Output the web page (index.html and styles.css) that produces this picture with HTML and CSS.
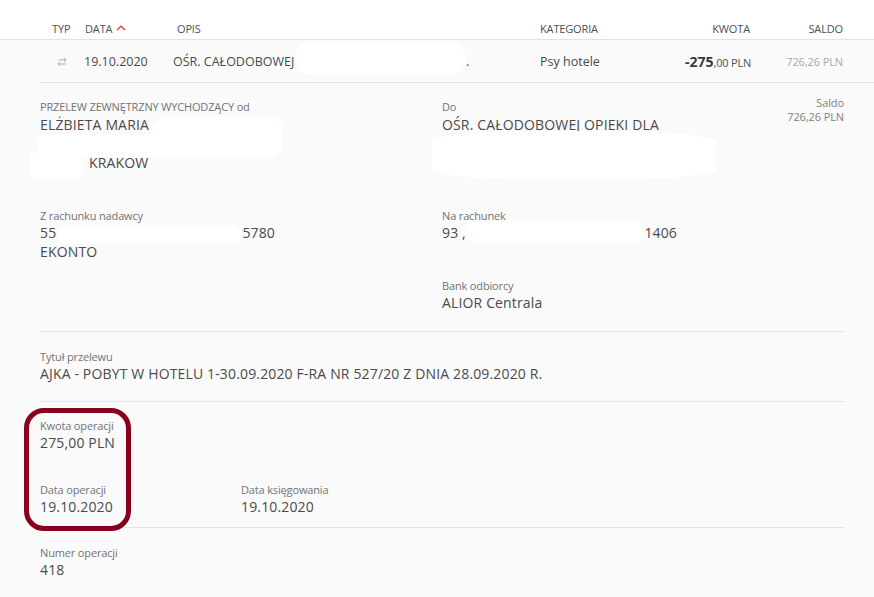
FILE: index.html
```html
<!DOCTYPE html>
<html lang="pl">
<head>
<meta charset="utf-8">
<title>Szczegóły operacji</title>
<link rel="stylesheet" href="styles.css">
</head>
<body>
<div class="page">
  <div class="thead">
    <span class="c-typ">TYP</span>
    <span class="c-data">DATA <svg class="sort" width="10" height="6" viewBox="0 0 10 6"><path d="M1 5 L5 1 L9 5" fill="none" stroke="#e8252e" stroke-width="1.2"/></svg></span>
    <span class="c-opis">OPIS</span>
    <span class="c-kat">KATEGORIA</span>
    <span class="c-kw">KWOTA</span>
    <span class="c-sal">SALDO</span>
  </div>
  <div class="trow">
    <span class="c-typ icon"><svg width="10" height="10" viewBox="0 0 10 10"><path d="M1.500 3 H9 M7 1 L9 3 L7 5" fill="none" stroke="#7ccb8b" stroke-width="1"/><path d="M8.500 7 H1 M3 5 L1 7 L3 9" fill="none" stroke="#7ccb8b" stroke-width="1"/></svg></span>
    <span class="c-data val-row">19.10.2020</span>
    <span class="c-opis val-row">OŚR. CAŁODOBOWEJ<span class="dot">.</span></span>
    <span class="c-kat val-row">Psy hotele</span>
    <span class="c-kw amount"><b>-275</b>,00 PLN</span>
    <span class="c-sal balance">726,26 PLN</span>
  </div>
  <div class="details">
    <section class="sec parties">
      <div class="col">
        <div class="label">PRZELEW ZEWNĘTRZNY WYCHODZĄCY od</div>
        <div class="value">ELŻBIETA MARIA</div>
        <div class="value city">KRAKÓW</div>
      </div>
      <div class="col col-2">
        <div class="label">Do</div>
        <div class="value">OŚR. CAŁODOBOWEJ OPIEKI DLA</div>
      </div>
      <div class="saldo">Saldo<br>726,26 PLN</div>
    </section>
    <section class="sec accounts">
      <div class="col">
        <div class="label">Z rachunku nadawcy</div>
        <div class="value acct"><span>55</span><span>5780</span></div>
        <div class="value">EKONTO</div>
      </div>
      <div class="col col-2">
        <div class="label">Na rachunek</div>
        <div class="value acct"><span>93 ,</span><span>1406</span></div>
        <div class="label bank">Bank odbiorcy</div>
        <div class="value">ALIOR Centrala</div>
      </div>
    </section>
    <section class="sec title">
      <div class="label">Tytuł przelewu</div>
      <div class="value">AJKA - POBYT W HOTELU 1-30.09.2020 F-RA NR 527/20 Z DNIA 28.09.2020 R.</div>
    </section>
    <section class="sec amounts">
      <div class="label">Kwota operacji</div>
      <div class="value">275,00 PLN</div>
      <div class="dates">
        <div class="date-a">
          <div class="label">Data operacji</div>
          <div class="value">19.10.2020</div>
        </div>
        <div>
          <div class="label">Data księgowania</div>
          <div class="value">19.10.2020</div>
        </div>
      </div>
    </section>
    <section class="sec number">
      <div class="label">Numer operacji</div>
      <div class="value">418</div>
    </section>
  </div>
  <i class="blob b1"></i><i class="blob b2"></i><i class="blob b3"></i><i class="blob b4"></i><i class="blob b5"></i><i class="blob b6"></i><i class="blob b7"></i>
  <i class="ring"></i>
</div>
</body>
</html>
```
FILE: styles.css
```css
* { box-sizing: border-box; }
html, body { margin: 0; padding: 0; }
body { background: #fafafa; color: #4a4a4a; font-family: "Open Sans", sans-serif; }
.page { position: relative; width: 874px; height: 597px; overflow: hidden; }

.thead { display: flex; align-items: center; height: 40px; padding-top: 17px; background: #fff; border-bottom: 1px solid #e2e2e2; font-size: 11px; color: #505050; letter-spacing: -0.15px; }
.trow { display: flex; align-items: center; height: 43px; padding-top: 1px; border-bottom: 1px solid #e4e4e4; margin-left: 40px; margin-right: -40px; }

.c-typ { width: 33px; flex: none; margin-left: 52px; }
.trow .c-typ { width: 44px; margin-left: 0; padding-left: 17px; }
.c-data { width: 92px; flex: none; }
.trow .c-data { width: 89px; }
.c-opis { width: 363px; flex: none; position: relative; }
.trow .c-opis { width: 367px; }
.c-kat { width: 148px; flex: none; }
.trow .c-kat { width: 145px; }
.c-kw { width: 62px; flex: none; text-align: right; }
.c-sal { width: 93px; flex: none; text-align: right; }
.trow .c-sal { width: 93px; margin-left: 3px; }
.sort { margin-left: 1px; vertical-align: 2px; }
.icon svg { display: block; }
.val-row { font-size: 12.500px; color: #4a4a4a; }
.dot { position: absolute; left: 293px; }
.amount { font-size: 11px; white-space: nowrap; color: #505050; letter-spacing: -0.2px; }
.amount b { font-size: 14px; color: #3a3a3a; letter-spacing: 0; }
.balance { font-size: 11px; color: #a6a6a6; white-space: nowrap; letter-spacing: -0.1px; }

.details { padding: 0 30px 0 40px; }
.sec { border-bottom: 1px solid #e4e4e4; }
.parties { display: flex; height: 125px; padding-top: 17px; border: 0; }
.accounts { display: flex; height: 124px; padding-top: 1px; }
.col { width: 402px; flex: none; }
.col-2 { width: auto; flex: 1; }
.saldo { flex: none; text-align: right; font-size: 11px; line-height: 14px; color: #808080; margin-top: -4px; white-space: nowrap; letter-spacing: -0.1px; }
.label { font-size: 11px; line-height: 14px; color: #737373; letter-spacing: -0.15px; white-space: nowrap; }
.value { font-size: 14px; line-height: 19px; color: #4a4a4a; letter-spacing: 0.15px; white-space: nowrap; }
.parties .value:nth-child(2) { margin-top: 1px; }
.city { margin: 19px 0 0 49px; }
.acct { display: flex; width: 235px; justify-content: space-between; }
.bank { margin-top: 37px; }
.title { height: 70px; padding-top: 18px; }
.amounts { height: 126px; padding-top: 17px; }
.dates { display: flex; margin-top: 31px; }
.date-a { width: 201px; }
.number { border: 0; padding-top: 18px; }

.blob { position: absolute; display: block; background: #fff; }
.b1 { left: 295px; top: 43px; width: 171px; height: 31px; border-radius: 14px; }
.b2 { left: 152px; top: 117px; width: 131px; height: 40px; border-radius: 14px; }
.b3 { left: 37px; top: 134px; width: 130px; height: 23px; border-radius: 10px; }
.b4 { left: 29px; top: 150px; width: 56px; height: 30px; border-radius: 12px; }
.b5 { left: 432px; top: 131px; width: 284px; height: 49px; border-radius: 50% / 20%; }
.b6 { left: 57px; top: 225px; width: 185px; height: 19px; border-radius: 10px; }
.b7 { left: 465px; top: 222px; width: 178px; height: 21px; border-radius: 10px; }
.ring { position: absolute; left: 24px; top: 408px; width: 107px; height: 123px; border: 5px solid #88001b; border-radius: 20px; }
```
